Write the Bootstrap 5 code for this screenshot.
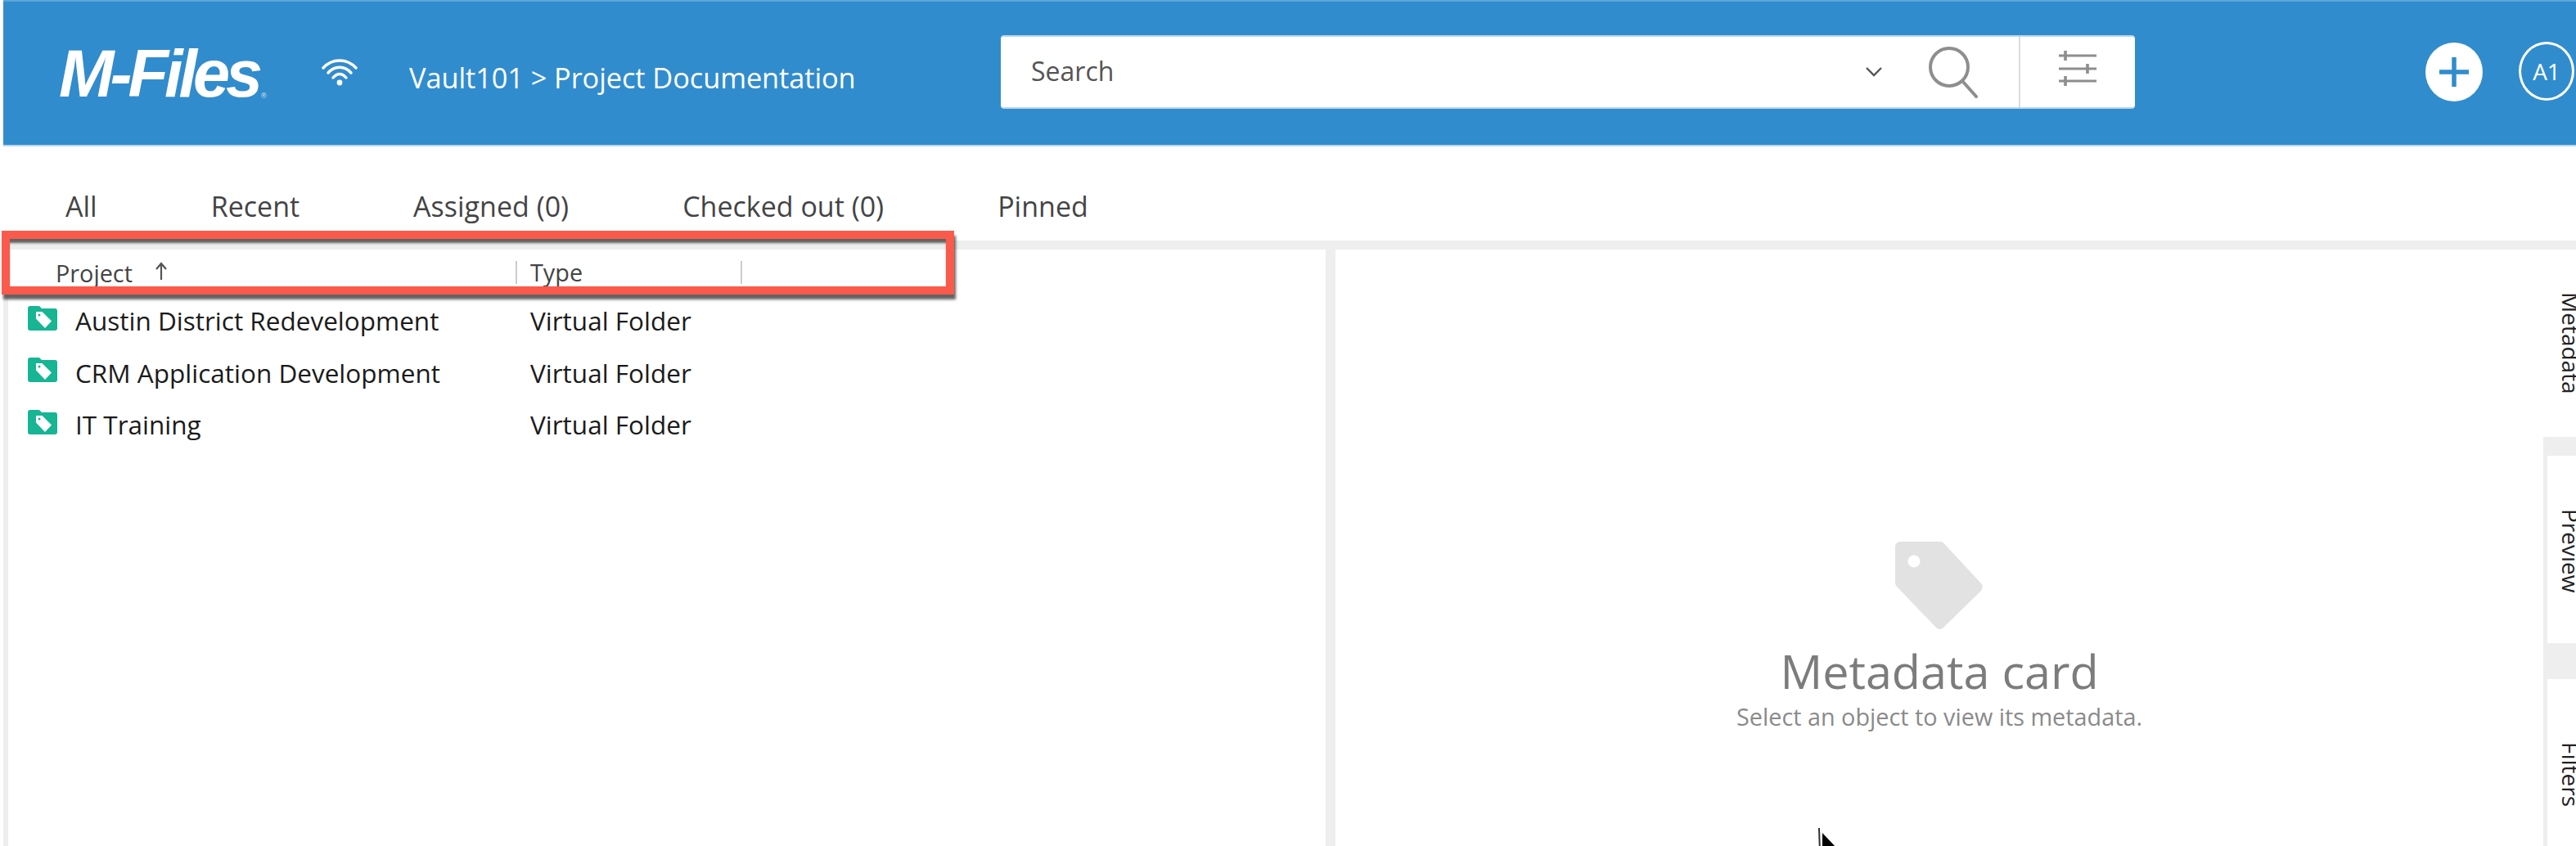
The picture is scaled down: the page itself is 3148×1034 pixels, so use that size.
<!DOCTYPE html>
<html lang="en">
<head>
<meta charset="utf-8">
<title>M-Files</title>
<link rel="stylesheet" href="https://cdn.jsdelivr.net/npm/bootstrap@5.3.0/dist/css/bootstrap.min.css">
<style>
html,body{height:100%;margin:0}
body{width:3148px;height:1034px;overflow:hidden;background:#fff;padding-left:4px;position:relative;font-family:"Open Sans","Noto Sans",sans-serif;color:#222}
.mf-top{height:179px;background:#318ccd;border-top:2px solid #5da6d9;border-bottom:2px solid #b9d8ee;padding:0;flex-wrap:nowrap;justify-content:flex-start}
.mf-logo{margin:0 0 0 68px;width:256px;height:90px;color:#fff;font:italic 700 81px/90px "Liberation Sans",sans-serif;letter-spacing:-5px;white-space:nowrap;padding:0;flex:none}
.mf-logo sup{font-size:9px;letter-spacing:0;font-style:normal;top:0;vertical-align:-2px;font-weight:400;margin-left:3px;opacity:.8}
.mf-wifi{width:44px;height:34px;margin-left:65px;margin-top:-4px;flex:none}
.mf-crumb{margin-left:63px;margin-top:10px;width:723px;color:#fff;font-size:34.4px;white-space:nowrap;flex:none;letter-spacing:-.1px}
.mf-search{width:1386px;height:90px;background:#fff;border-radius:4px;border-top:2px solid #b6d6ec;border-bottom:2px solid #b6d6ec;margin-top:-4px;flex:none}
.mf-search input{width:1010px;height:100%;border:0;outline:0;background:transparent;padding:0 0 2px 37px;font:32px "Open Sans",sans-serif;color:#555;box-shadow:none;flex:none}
.mf-search input::placeholder{color:#555;opacity:1}
.mf-chev{width:24px;height:14px;margin-left:45px;flex:none}
.mf-mag{width:62px;height:64px;margin-left:54px;flex:none}
.mf-vsep{width:2px;height:100%;background:#dcdcdc;margin-left:49px;flex:none}
.mf-fil{width:48px;height:44px;margin-left:46px;margin-top:-8px;flex:none}
.mf-plus{width:70px;height:72px;margin-left:355px;margin-top:-4px;flex:none}
.mf-av{width:68px;height:72px;margin-left:44px;margin-top:-6px;flex:none;border:3px solid #fff;border-radius:50%;color:#fff;font-size:28px}
.mf-tabs{height:115px;gap:139px;padding:30px 0 0 76px;align-items:center;flex-wrap:nowrap}
.mf-tabs .nav-link{padding:0;color:#444;font-size:34px;line-height:40px}
.mf-line{height:11px;background:#eee}
.mf-body{height:729px}
.mf-list{width:1616px;border-left:6px solid #eee;flex:none}
.mf-head{height:50px;padding-top:6px;color:#444;font-size:28.8px;line-height:32px;align-items:center}
.mf-h1{width:622px;padding-left:58px;height:28px;line-height:28px;border-right:2px solid #ccc;margin-right:16px;flex:none}
.mf-h2{width:259px;height:28px;line-height:28px;border-right:2px solid #ccc;flex:none}
.mf-arrow{width:18px;height:24px;margin-left:26px;vertical-align:2px}
.mf-row{height:63.5px;align-items:center;font-size:31.5px;color:#1b1b1b;white-space:nowrap}
.mf-rows{padding-top:5px}
.mf-ic{width:36px;height:30px;margin-left:24px;margin-right:2px;margin-top:-6px;flex:none}
.mf-name{width:556px;margin-left:20px;flex:none}
.mf-split{width:12px;background:#eee;flex:none}
.mf-pane{flex:1 1 auto;padding-top:357px;text-align:center}
.mf-tag{width:108px;height:108px;display:block;margin:0 auto}
.mf-title{font-size:57.5px;line-height:64px;color:#7c7c7c;margin:18px 0 0;font-weight:400}
.mf-sub{font-size:28.8px;line-height:36px;color:#8a8a8a;margin:6px 0 0}
.mf-rail{width:52px;margin-right:-12px;flex:none;overflow:hidden}
.mf-tab{writing-mode:vertical-rl;font-size:28px;line-height:36px;color:#222;white-space:nowrap;background:#fff}
.mf-t1{height:229px;padding-top:52px;flex:none}
.mf-gap{background:#eee;flex:none}
.mf-g1{height:23px}
.mf-g2{height:44px}
.mf-t2{height:229px;padding-top:65px;border-left:5px solid #eee;flex:none}
.mf-t3{flex:1;padding-top:77px;border-left:5px solid #eee}
.mf-mark{position:absolute;left:2px;top:282px;width:1164px;height:78px;border:10px solid #fa5a4b;box-shadow:2px 6px 3px 0 rgba(60,60,60,.8),inset 0 6px 3px -1px rgba(60,60,60,.8);pointer-events:none}
.mf-cursor{position:absolute;left:2222px;top:1012px;width:24px;height:30px}
</style>
</head>
<body>
<nav class="navbar mf-top align-items-center">
  <a class="navbar-brand mf-logo" href="#">M-Files<sup>®</sup></a>
  <svg class="mf-wifi" viewBox="0 0 44 34" fill="none" stroke="#fff" stroke-width="3.4" stroke-linecap="round"><path d="M2 12C13 0 31 0 42 12"/><path d="M8 18C16 9 28 9 36 18"/><path d="M14 24C19 18 25 18 30 24"/><circle cx="22" cy="30" r="3.4" fill="#fff" stroke="none"/></svg>
  <span class="mf-crumb">Vault101 &gt; Project Documentation</span>
  <div class="mf-search d-flex align-items-center">
    <input class="form-control" type="text" placeholder="Search" aria-label="Search">
    <svg class="mf-chev" viewBox="0 0 24 14" fill="none" stroke="#555" stroke-width="2.4"><path d="M3 2l9 9 9-9"/></svg>
    <svg class="mf-mag" viewBox="0 0 62 64" fill="none" stroke="#8e8e8e" stroke-width="4" stroke-linecap="round"><circle cx="26" cy="26" r="23"/><path d="M43 44l16 18"/></svg>
    <span class="mf-vsep"></span>
    <svg class="mf-fil" viewBox="0 0 48 44" fill="none" stroke="#8e8e8e" stroke-width="3.2"><path d="M1 6h46M1 22h46M1 37h46"/><path d="M9 0v12M36 16v12M9 31v12" stroke-width="3.6"/></svg>
  </div>
  <svg class="mf-plus" viewBox="0 0 70 72"><ellipse cx="35" cy="36" rx="35" ry="36" fill="#fff"/><path d="M35 18v36M17 36h36" stroke="#318ccd" stroke-width="5.5"/></svg>
  <div class="mf-av d-flex align-items-center justify-content-center">A1</div>
</nav>
<ul class="nav mf-tabs">
  <li class="nav-item"><a class="nav-link" href="#">All</a></li>
  <li class="nav-item"><a class="nav-link" href="#">Recent</a></li>
  <li class="nav-item"><a class="nav-link" href="#">Assigned (0)</a></li>
  <li class="nav-item"><a class="nav-link" href="#">Checked out (0)</a></li>
  <li class="nav-item"><a class="nav-link" href="#">Pinned</a></li>
</ul>
<div class="mf-line"></div>
<div class="d-flex mf-body">
  <section class="mf-list">
    <div class="d-flex mf-head">
      <div class="mf-h1">Project<svg class="mf-arrow" viewBox="0 0 18 24" fill="none" stroke="#555" stroke-width="2.2"><path d="M9 23V3M3 10l6-7 6 7"/></svg></div>
      <div class="mf-h2">Type</div>
    </div>
    <div class="mf-rows">
      <div class="d-flex mf-row"><svg class="mf-ic" viewBox="0 0 36 30"><use href="#vf"/></svg><span class="mf-name">Austin District Redevelopment</span><span>Virtual Folder</span></div>
      <div class="d-flex mf-row"><svg class="mf-ic" viewBox="0 0 36 30"><use href="#vf"/></svg><span class="mf-name">CRM Application Development</span><span>Virtual Folder</span></div>
      <div class="d-flex mf-row"><svg class="mf-ic" viewBox="0 0 36 30"><use href="#vf"/></svg><span class="mf-name">IT Training</span><span>Virtual Folder</span></div>
    </div>
  </section>
  <div class="mf-split"></div>
  <section class="mf-pane">
    <svg class="mf-tag" viewBox="0 0 108 108"><path d="M6 0H55a6 6 0 0 1 4.500 2L105 51a6.500 6.500 0 0 1 0 9L59 105a6 6 0 0 1-9 0L2 55a6 6 0 0 1-2-4.500V6a6 6 0 0 1 6-6z" fill="#e2e2e2"/><circle cx="23" cy="24" r="7.500" fill="#fff"/></svg>
    <h2 class="mf-title">Metadata card</h2>
    <p class="mf-sub">Select an object to view its metadata.</p>
  </section>
  <aside class="mf-rail d-flex flex-column">
    <div class="mf-tab mf-t1">Metadata</div>
    <div class="mf-gap mf-g1"></div>
    <div class="mf-tab mf-t2">Preview</div>
    <div class="mf-gap mf-g2"></div>
    <div class="mf-tab mf-t3">Filters</div>
  </aside>
</div>
<div class="mf-mark"></div>
<svg class="mf-cursor" viewBox="0 0 24 30"><path d="M1 0l1 30" stroke="#333" stroke-width="2"/><path d="M5 6l18 19H5z" fill="#000"/></svg>
<svg width="0" height="0" class="d-block"><defs><symbol id="vf" viewBox="0 0 36 30"><path d="M3 0h11l3 3h16a3 3 0 0 1 3 3v21a3 3 0 0 1-3 3H3a3 3 0 0 1-3-3V3a3 3 0 0 1 3-3z" fill="#17b594"/><path d="M10 7h7.500L29 18.500 21 27 10 15.500z" fill="#fff"/><circle cx="14" cy="11" r="1.500" fill="#17b594"/></symbol></defs></svg>
<script src="https://cdn.jsdelivr.net/npm/bootstrap@5.3.0/dist/js/bootstrap.bundle.min.js"></script>
</body>
</html>
